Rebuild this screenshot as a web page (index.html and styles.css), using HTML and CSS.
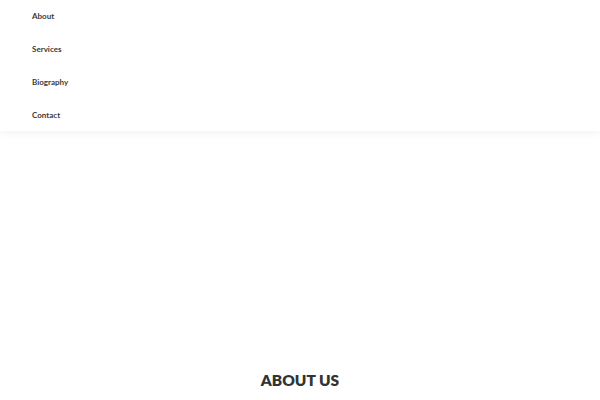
FILE: index.html
```html
<!DOCTYPE html>
<html lang="en">
<head>
    <meta charset="UTF-8">
    <meta name="viewport" content="width=device-width, initial-scale=1.0">
    <title>About Us</title>
    <link rel="stylesheet" href="styles.css">
</head>
<body>
    <header class="site-header">
        <nav class="menu">
            <a href="#about">About</a>
            <a href="#services">Services</a>
            <a href="#biography">Biography</a>
            <a href="#contact">Contact</a>
        </nav>
    </header>

    <section class="hero"></section>

    <section id="about" class="about">
        <h2>ABOUT US</h2>
    </section>
</body>
</html>
```

FILE: styles.css
```css
body {
    margin: 0;
    font-family: Lato, "Noto Sans", sans-serif;
    background-color: #fff;
    color: #333;
}

.site-header {
    background-color: #fff;
    box-shadow: 0px 2px 8px 0px rgba(0, 0, 0, 0.06);
    height: 131px;
}

.menu {
    display: flex;
    flex-direction: column;
    padding: 11px 32px 0;
    gap: 22px;
}

.menu a {
    font-size: 8px;
    font-weight: 700;
    color: #3a3a3a;
    text-decoration: none;
    line-height: 11px;
}

.hero {
    height: 234px;
}

.about h2 {
    margin: 0;
    text-align: center;
    font-size: 15.5px;
    font-weight: 800;
    color: #333;
    line-height: 30px;
}
```
